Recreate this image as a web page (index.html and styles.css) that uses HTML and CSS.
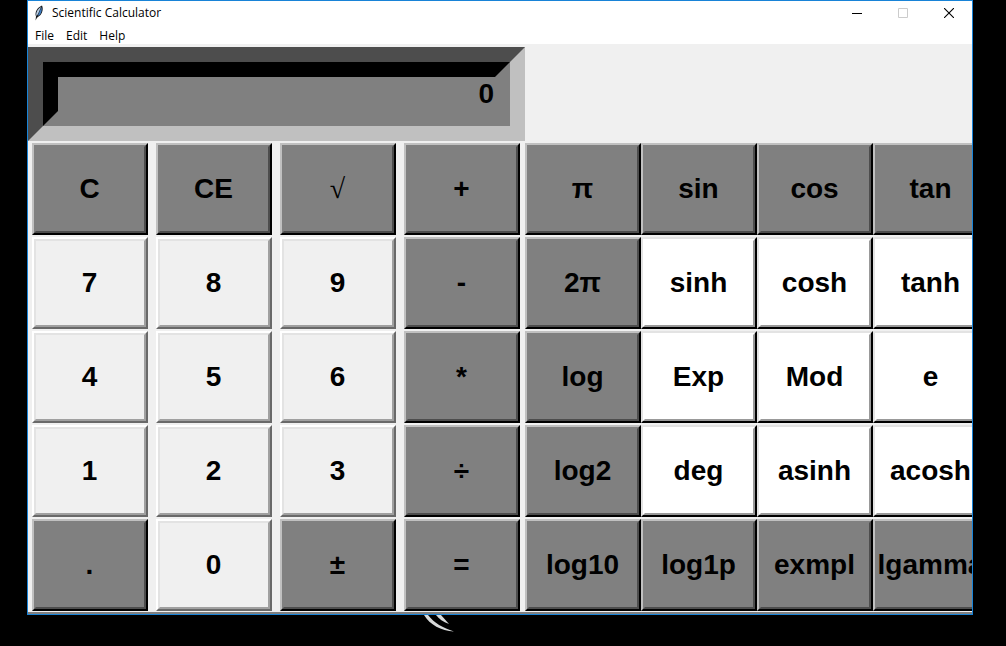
FILE: index.html
```html
<!DOCTYPE html>
<html lang="en">
<head>
<meta charset="utf-8">
<title>Scientific Calculator</title>
<link rel="stylesheet" href="styles.css">
</head>
<body>
<main class="window">
  <header class="titlebar">
    <svg class="app-icon" viewBox="0 0 12 16" aria-hidden="true">
      <path d="M2.500 15.500 3 11.500C1.500 7.500 4 2.500 9 .5c1.500 3 .5 7-1.500 9.500L4 12.800Z" fill="#17191c"/>
      <path d="M3.300 11C2.800 7.500 4.500 4 8 2L5 9Z" fill="#b9cfe6"/>
      <path d="M4.700 11 8.500 2C9.200 5 8.300 8 6.800 9.800Z" fill="#3f7fc4"/>
    </svg>
    <h1 class="title">Scientific Calculator</h1>
    <div class="controls">
      <button class="control" aria-label="Minimize"><svg viewBox="0 0 10 10"><path d="M0 5.500h10" stroke="#000"/></svg></button>
      <button class="control" aria-label="Maximize" disabled><svg viewBox="0 0 10 10"><path d="M.5.5h9v9h-9z" fill="none" stroke="#ccc"/></svg></button>
      <button class="control" aria-label="Close"><svg viewBox="0 0 10 10"><path d="M0 0 10 10M10 0 0 10" stroke="#000" stroke-width="1.100"/></svg></button>
    </div>
  </header>
  <nav class="menu">
    <button class="menu-item">File</button>
    <button class="menu-item">Edit</button>
    <button class="menu-item">Help</button>
  </nav>
  <div class="frame">
    <div class="display"><input class="display-input" aria-label="Display" value="0"></div>
    <div class="pads">
      <div class="pad pad-basic">
        <button class="key">C</button><button class="key">CE</button><button class="key thin">√</button><button class="key">+</button>
        <button class="key light">7</button><button class="key light">8</button><button class="key light">9</button><button class="key">-</button>
        <button class="key light">4</button><button class="key light">5</button><button class="key light">6</button><button class="key">*</button>
        <button class="key light">1</button><button class="key light">2</button><button class="key light">3</button><button class="key">÷</button>
        <button class="key">.</button><button class="key light">0</button><button class="key">±</button><button class="key">=</button>
      </div>
      <div class="pad pad-science">
        <button class="key">π</button><button class="key">sin</button><button class="key">cos</button><button class="key">tan</button>
        <button class="key">2π</button><button class="key white">sinh</button><button class="key white">cosh</button><button class="key white">tanh</button>
        <button class="key">log</button><button class="key white">Exp</button><button class="key white">Mod</button><button class="key white">e</button>
        <button class="key">log2</button><button class="key white">deg</button><button class="key white">asinh</button><button class="key white">acosh</button>
        <button class="key">log10</button><button class="key">log1p</button><button class="key">exmpl</button><button class="key">lgamma</button>
      </div>
    </div>
  </div>
</main>
<svg class="streaks" viewBox="0 0 34 18" aria-hidden="true">
  <path d="M1 0h4C11 8 20 13 31 16.500 18 15.500 7 10 1 0Z" fill="#d8dada"/>
  <path d="M13 0h5l8 9C20 7 16 4 13 0Z" fill="#d8dada"/>
</svg>
</body>
</html>
```

FILE: styles.css
```css
* {
  box-sizing: border-box;
}

body {
  margin: 0;
  padding: 0 33px 0 27px;
  min-height: 100vh;
  overflow: hidden;
  background: #000;
  color: #000;
  font-family: "Liberation Sans", Arial, sans-serif;
}

button {
  margin: 0;
  padding: 0;
  border: 0;
  background: none;
  color: inherit;
}

.window {
  overflow: hidden;
  border: 1px solid #1883d7;
  background: #fff;
}

.titlebar {
  display: flex;
  align-items: center;
  height: 24px;
  padding-left: 5px;
}

.app-icon {
  width: 12px;
  height: 16px;
}

.title {
  flex: 1;
  margin: 0;
  padding-left: 7px;
  font: 400 12px/18px "Open Sans", "Noto Sans", sans-serif;
}

.controls {
  display: flex;
}

.control {
  display: grid;
  place-items: center;
  width: 46px;
  height: 24px;
}

.control svg {
  display: block;
  width: 10px;
  height: 10px;
}

.menu {
  display: flex;
  gap: 12px;
  height: 19px;
  padding: 1px 0 0 7px;
}

.menu-item {
  font: 400 12px/20px "Open Sans", "Noto Sans", sans-serif;
}

.frame {
  padding-top: 3px;
  border-bottom: 2px solid #808080;
  background: #f0f0f0;
}

.display {
  width: 497px;
  border: 15px solid;
  border-color: #4d4d4d #c0c0c0 #c0c0c0 #4d4d4d;
  background: #808080;
}

.display-input {
  display: block;
  width: 100%;
  height: 64px;
  padding: 0 1px 0 0;
  border: 15px solid;
  border-color: #000 #808080 #808080 #000;
  border-radius: 0;
  outline: 0;
  background: #808080;
  font: 700 28px "Liberation Sans", Arial, sans-serif;
  text-align: right;
}

.pads {
  display: flex;
  padding: 2px 0 1px;
}

.pad {
  display: grid;
  flex: none;
  grid-template-columns: repeat(4, 116px);
  grid-auto-rows: 92px;
  row-gap: 2px;
}

.pad-basic {
  column-gap: 8px;
  padding: 0 5px 0 4px;
}

.key {
  position: relative;
  padding-right: 1px;
  border: 2px solid;
  border-color: #c0c0c0 #000 #000 #c0c0c0;
  background: #808080;
  font: 700 28px "Liberation Sans", Arial, sans-serif;
}

.key::before {
  content: "";
  position: absolute;
  inset: 0;
  border: 2px solid;
  border-color: #808080 #4d4d4d #4d4d4d #808080;
}

.light {
  border-color: #fff #696969 #696969 #fff;
  background: #f0f0f0;
}

.light::before {
  border-color: #e3e3e3 #a0a0a0 #a0a0a0 #e3e3e3;
}

.white {
  border-color: #e3e3e3 #000 #000 #e3e3e3;
  background: #fff;
}

.white::before {
  border-color: #fff #999 #999 #fff;
}

.thin {
  font-family: "Liberation Serif", "Times New Roman", serif;
  font-weight: 400;
}

.streaks {
  display: block;
  width: 34px;
  height: 18px;
  margin-left: 396px;
}
```
